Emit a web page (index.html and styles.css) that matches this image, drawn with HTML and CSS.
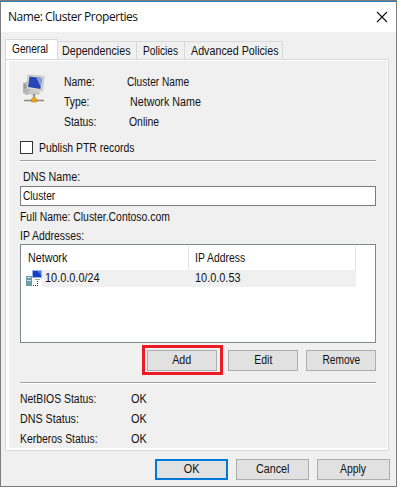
FILE: index.html
```html
<!DOCTYPE html>
<html lang="en">
<head>
<meta charset="utf-8">
<title>Name: Cluster Properties</title>
<link rel="stylesheet" href="styles.css">
</head>
<body>
<div class="window">
  <header class="titlebar">
    <h1 class="title">Name: Cluster Properties</h1>
    <svg class="close" width="12" height="12" viewBox="0 0 12 12"><path d="M1 1L11 11M11 1L1 11" stroke="#111" stroke-width="1.1" fill="none"/></svg>
  </header>
  <nav class="tabs">
    <div class="tab active"><span class="t tight">General</span></div>
    <div class="tab dep"><span class="t loose">Dependencies</span></div>
    <div class="tab pol"><span class="t tight">Policies</span></div>
    <div class="tab adv"><span class="t loose">Advanced Policies</span></div>
  </nav>
  <main class="panel">
    <section class="summary">
      <svg class="net-icon" width="26" height="32" viewBox="0 0 26 32">
        <path d="M1 9L5 8L8 10V20L5 21L1 19Z" fill="#b4b6b2"/>
        <path d="M2 11.500L4 11M2 14L5 13" stroke="#777" fill="none"/>
        <path d="M6 1L22 2.500L20.500 17L4.500 15Z" fill="#dddcd2" stroke="#b5b5ac" stroke-width=".7"/>
        <path d="M7.500 2.500L20 4L18.500 15L6 13Z" fill="#2945b5"/>
        <path d="M14 3.300L20 4L18.800 13Z" fill="#839be0"/>
        <path d="M8 16L17 17.500L19 20L12 21.500L5 19Z" fill="#c8c8c2"/>
        <path d="M12 20V26" stroke="#929287" stroke-width="2"/>
        <path d="M2 26.500H22" stroke="#8a8a78" stroke-width="1.500"/>
        <path d="M9 25.500L12 22.500L15 25.500L14.500 28H9.500Z" fill="#e5a21c" stroke="#b98422" stroke-width=".6"/>
      </svg>
      <dl class="facts">
        <dt><span class="t">Name:</span></dt><dd><span class="t tight">Cluster Name</span></dd>
        <dt><span class="t">Type:</span></dt><dd class="v2"><span class="t loose">Network Name</span></dd>
        <dt><span class="t">Status:</span></dt><dd class="v3"><span class="t">Online</span></dd>
      </dl>
    </section>
    <div class="check"><span class="box"></span><span class="t">Publish PTR records</span></div>
    <div class="rule"></div>
    <div class="dns-label"><span class="t loose">DNS Name:</span></div>
    <div class="field"><span class="t tight">Cluster</span></div>
    <div class="full"><span class="t">Full Name: Cluster.Contoso.com</span></div>
    <div class="ip-label"><span class="t">IP Addresses:</span></div>
    <div class="list">
      <div class="head"><div class="c1"><span class="t loose">Network</span></div><div class="c2"><span class="t">IP Address</span></div></div>
      <div class="row">
        <svg class="node-icon" width="16" height="17" viewBox="0 0 16 17">
          <path d="M0 6H6V16H0Z" fill="#6f98a8"/>
          <path d="M1 7.500H5M1 10.500H5" stroke="#c9e2e8"/>
          <path d="M1 14H4" stroke="#55b87a" stroke-width="1.500"/>
          <path d="M6 0H16V8H6Z" fill="#91b6e8"/>
          <path d="M7 1H15V7H7Z" fill="#173ec6"/>
          <path d="M11 1H15V5Z" fill="#527be8"/>
          <path d="M9 9.500H14" stroke="#9ba9b8"/>
          <path d="M7 15.500H12M11.500 11V15" stroke="#222" stroke-dasharray="1 1"/>
        </svg>
        <div class="cell1"><span class="t digits">10.0.0.0/24</span></div><div class="cell2"><span class="t digits">10.0.0.53</span></div>
      </div>
    </div>
    <div class="actions">
      <div class="mark"><button class="btn"><span class="t mid loose">Add</span></button></div>
      <button class="btn edit"><span class="t mid">Edit</span></button>
      <button class="btn"><span class="t mid tight">Remove</span></button>
    </div>
    <div class="rule"></div>
    <dl class="statuses">
      <dt><span class="t">NetBIOS Status:</span></dt><dd><span class="t digits">OK</span></dd>
      <dt><span class="t loose">DNS Status:</span></dt><dd><span class="t digits">OK</span></dd>
      <dt><span class="t">Kerberos Status:</span></dt><dd><span class="t digits">OK</span></dd>
    </dl>
  </main>
  <footer class="footer">
    <button class="btn wide default"><span class="t mid digits">OK</span></button>
    <button class="btn wide"><span class="t mid loose">Cancel</span></button>
    <button class="btn wide"><span class="t mid">Apply</span></button>
  </footer>
</div>
</body>
</html>
```
FILE: styles.css
```css
* { box-sizing: border-box; }
body { margin: 0; background: #fff; font: 12px/20px "Liberation Sans", Arial, sans-serif; color: #111; white-space: nowrap; }
dl, dd, h1 { margin: 0; }
/* condensed dialog lettering */
.t { display: inline-block; transform: scaleX(.868); transform-origin: 0 50%; }
.tight { transform: scaleX(.846); }
.loose { transform: scaleX(.893); }
.digits { transform: scaleX(.91); }
.mid { transform-origin: 50% 50%; }
.window { width: 397px; height: 487px; border: 1px solid #7c7c7c; background: #f0f0f0; }
.titlebar { height: 31px; border-top: 1px solid #2f7ebc; background: #fff; display: flex; align-items: center; justify-content: space-between; padding: 0 8px 0 7px; }
.title { font: 12px/20px "Open Sans", sans-serif; letter-spacing: -.46px; }
.close { display: block; }
.tabs { display: flex; align-items: flex-end; height: 27px; padding-left: 4px; }
.tab { height: 18px; line-height: 18px; border: 1px solid #d9d9d9; border-left: 0; border-bottom: 0; padding-left: 4px; }
.tab.active { width: 53px; height: 20px; border-left: 1px solid #d9d9d9; background: #fff; padding-left: 6px; }
.dep { width: 79px; }
.pol { width: 48px; padding-left: 6px; }
.adv { width: 98px; padding-left: 6px; }
.panel { width: 384px; height: 392px; margin-left: 4px; border: 1px solid #d9d9d9; box-shadow: inset 3px 0 #fff, inset -1px 0 #fff, inset 0 1px #fff, inset 0 -2px #fff; padding: 12px 12px 0 14px; }
.summary { display: flex; height: 69px; }
.net-icon { display: block; margin: 2px 0 0 2px; }
.facts { display: grid; grid-template-columns: 63px auto; grid-auto-rows: 20px; margin-left: 16px; }
.v2 { padding-left: 3px; }
.v3 { padding-left: 2px; }
.check { display: flex; align-items: center; height: 13px; gap: 6px; }
.box { width: 13px; height: 13px; border: 1px solid #333; background: #fff; }
.rule { height: 2px; border-top: 1px solid #a0a0a0; background: #fff; margin-top: 6px; width: 356px; }
.dns-label { height: 24px; line-height: 31px; padding-left: 3px; }
.field { width: 356px; height: 20px; border: 1px solid #7a7a7a; background: #fff; line-height: 18px; padding-left: 2px; }
.full { height: 20px; line-height: 22px; }
.ip-label { height: 18px; line-height: 20px; }
.list { width: 356px; height: 99px; border: 1px solid #828790; background: #fff; padding-top: 1px; }
.head { display: flex; height: 24px; line-height: 24px; }
.c1 { width: 168px; padding-left: 7px; border-right: 1px solid #e2e2e2; }
.c2 { width: 167px; padding-left: 6px; border-right: 1px solid #e2e2e2; }
.row { display: flex; height: 17px; line-height: 17px; padding-left: 5px; }
.node-icon { display: block; flex: none; }
.cell1 { width: 149px; padding-left: 3px; background: #f0f0f0; }
.cell2 { width: 165px; padding-left: 4px; background: #f0f0f0; }
.actions { display: flex; align-items: center; height: 30px; margin-top: 2px; padding-left: 122px; }
.btn { width: 70px; height: 21px; border: 1px solid #adadad; background: #e1e1e1; border-radius: 0; padding: 0; font: inherit; line-height: 19px; color: #111; }
.mark { width: 81px; height: 30px; border: 3px solid #ed1c24; display: flex; align-items: center; padding-left: 2px; }
.edit { margin: 0 8px 0 5px; }
.actions + .rule { margin-top: 7px; }
.statuses { display: grid; grid-template-columns: 111px auto; grid-auto-rows: 20px; margin-top: 5px; }
.footer { display: flex; gap: 8px; padding: 8px 0 0 154px; }
.wide { width: 73px; }
.default { border: 2px solid #0078d7; line-height: 17px; }
```
